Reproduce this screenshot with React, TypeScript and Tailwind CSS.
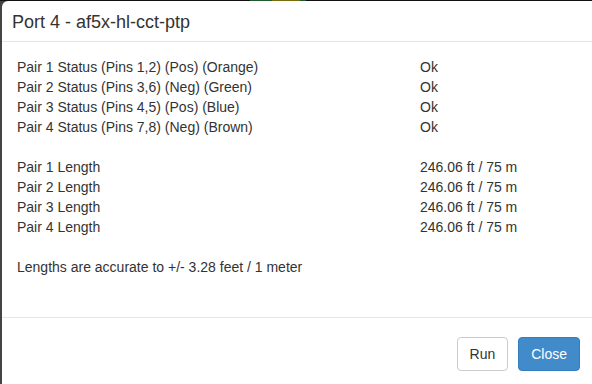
import React from "react";

const statusRows = [
  ["Pair 1 Status (Pins 1,2) (Pos) (Orange)", "Ok"],
  ["Pair 2 Status (Pins 3,6) (Neg) (Green)", "Ok"],
  ["Pair 3 Status (Pins 4,5) (Pos) (Blue)", "Ok"],
  ["Pair 4 Status (Pins 7,8) (Neg) (Brown)", "Ok"],
];

const lengthRows = [
  ["Pair 1 Length", "246.06 ft / 75 m"],
  ["Pair 2 Length", "246.06 ft / 75 m"],
  ["Pair 3 Length", "246.06 ft / 75 m"],
  ["Pair 4 Length", "246.06 ft / 75 m"],
];

function Rows({ rows }: { rows: string[][] }) {
  return (
    <div className="grid grid-cols-[403px_1fr]">
      {rows.map(([k, v]) => (
        <React.Fragment key={k}>
          <div className="leading-[20px]">{k}</div>
          <div className="leading-[20px]">{v}</div>
        </React.Fragment>
      ))}
    </div>
  );
}

export default function App() {
  return (
    <div
      className="w-[592px] h-[384px] overflow-hidden bg-[#444444] flex flex-col text-[#333333]"
      style={{ fontFamily: '"Liberation Sans", Arial, Helvetica, sans-serif' }}
    >
      <div className="h-[1px] shrink-0 flex bg-[#111111]">
        <div className="w-[250px]" />
        <div className="w-[22px] bg-[#1e5a2e]" />
        <div className="w-[28px] bg-[#7a6a10]" />
        <div className="w-[6px] bg-[#1e5a2e]" />
      </div>
      <div className="flex-1 flex pl-[2px]">
        <div className="w-[598px] shrink-0 bg-white rounded-tl-[6px] flex flex-col">
          <div className="border-b border-[#e5e5e5] px-[10px] pt-[9px] pb-[5px]">
            <div className="text-[18px] leading-[25.7px]">Port 4 - af5x-hl-cct-ptp</div>
          </div>
          <div className="px-[15px] pt-[15px] pb-[40px] text-[14px]">
            <Rows rows={statusRows} />
            <div className="h-[20px]" />
            <Rows rows={lengthRows} />
            <div className="h-[20px]" />
            <div className="leading-[20px]">Lengths are accurate to +/- 3.28 feet / 1 meter</div>
          </div>
          <div className="border-t border-[#e5e5e5] pt-[19px] pr-[20px] pb-[20px] flex justify-end gap-[10px] text-[14px]">
            <button className="h-[34px] px-[12px] border border-[#cccccc] rounded-[4px] bg-white text-[#333333] leading-[20px]">
              Run
            </button>
            <button className="h-[34px] px-[12px] border border-[#357ebd] rounded-[4px] bg-[#428bca] text-white leading-[20px]">
              Close
            </button>
          </div>
        </div>
      </div>
    </div>
  );
}
